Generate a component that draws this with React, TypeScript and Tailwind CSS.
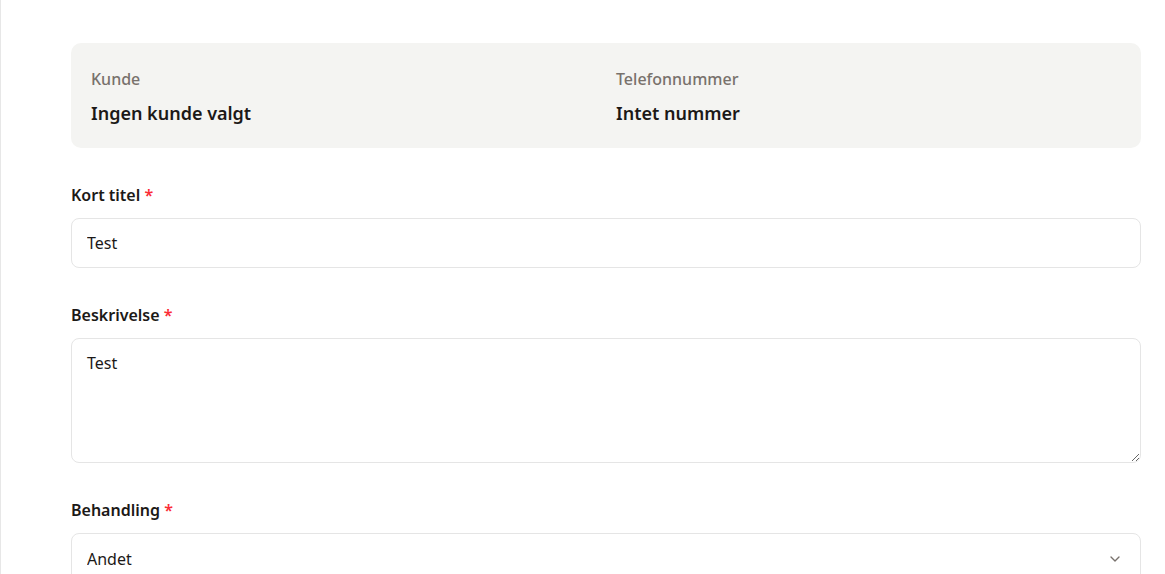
import { ChevronDown } from "lucide-react";

function Label({ text }: { text: string }) {
  return (
    <label className="block text-[16px] leading-5 font-semibold text-[#1c1917] mb-[13px]">
      {text} <span className="text-red-500">*</span>
    </label>
  );
}

export default function App() {
  return (
    <div
      className="min-h-[574px] bg-white border-l border-[#e7e7e7] pl-[70px] pr-6 pt-[43px] text-[#1c1917]"
      style={{ fontFamily: '"Segoe UI", "Noto Sans", sans-serif' }}
    >
      {/* Customer summary */}
      <div className="rounded-[10px] bg-[#f4f4f2] px-5 pt-6 pb-[21px] grid grid-cols-2 gap-5">
        <div>
          <p className="text-[16px] leading-6 font-medium text-[#78716c]">Kunde</p>
          <p className="mt-2 text-[18px] leading-7 font-semibold">Ingen kunde valgt</p>
        </div>
        <div>
          <p className="text-[16px] leading-6 font-medium text-[#78716c]">Telefonnummer</p>
          <p className="mt-2 text-[18px] leading-7 font-semibold">Intet nummer</p>
        </div>
      </div>

      <div className="mt-[37px] flex flex-col gap-[37px]">
        <div>
          <Label text="Kort titel" />
          <input
            defaultValue="Test"
            className="w-full h-[50px] rounded-lg border border-[#e5e5e5] px-[15px] text-[16px] outline-none"
          />
        </div>

        <div>
          <Label text="Beskrivelse" />
          <textarea
            defaultValue="Test"
            className="block w-full h-[125px] rounded-lg border border-[#e5e5e5] px-[15px] py-3 text-[16px] outline-none"
          />
        </div>

        <div>
          <Label text="Behandling" />
          <div className="relative">
            <select
              defaultValue="Andet"
              className="appearance-none w-full h-[52px] rounded-lg border border-[#e5e5e5] px-[15px] text-[16px] bg-white outline-none"
            >
              <option>Andet</option>
            </select>
            <ChevronDown
              className="absolute right-[18px] top-1/2 -translate-y-1/2 w-4 h-4 text-[#78716c] pointer-events-none"
              strokeWidth={2}
            />
          </div>
        </div>
      </div>
    </div>
  );
}
